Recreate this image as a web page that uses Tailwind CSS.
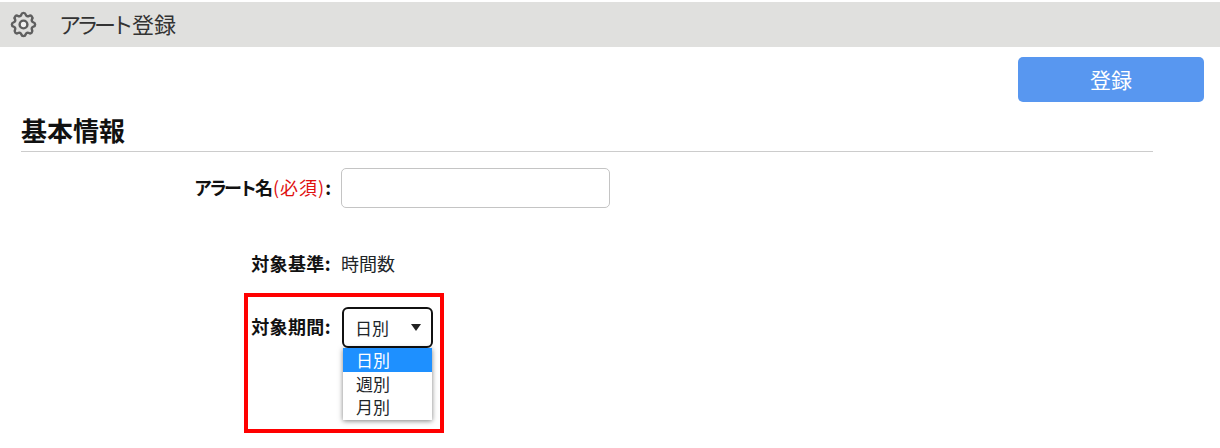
<!DOCTYPE html>
<html lang="ja">
<head>
    <meta charset="UTF-8">
    <title>アラート登録</title>
    <script src="https://cdn.jsdelivr.net/npm/@tailwindcss/browser@4"></script>
</head>
<body class="relative h-[448px] w-[1220px] overflow-hidden bg-white pt-[2px] font-['Noto_Sans_CJK_JP','Liberation_Sans',sans-serif] text-[#212529]">
    <header class="flex h-[45px] items-center bg-[#e0e0de] pl-[8px]">
        <svg class="h-[31px] w-[31px] text-[#5f5f5f]" viewBox="0 0 24 24" fill="none" stroke="currentColor" stroke-width="1.900" stroke-linecap="round" stroke-linejoin="round">
            <path d="M10.33 4.32c.43-1.76 2.92-1.76 3.35 0a1.72 1.72 0 0 0 2.57 1.07c1.54-.94 3.3.82 2.36 2.37a1.72 1.72 0 0 0 1.07 2.56c1.76.43 1.76 2.93 0 3.36a1.72 1.72 0 0 0-1.07 2.56c.94 1.54-.82 3.3-2.36 2.37a1.72 1.72 0 0 0-2.57 1.06c-.43 1.76-2.92 1.76-3.35 0a1.72 1.72 0 0 0-2.58-1.06c-1.54.93-3.3-.83-2.36-2.37a1.72 1.72 0 0 0-1.06-2.56c-1.76-.43-1.76-2.93 0-3.36a1.72 1.72 0 0 0 1.06-2.56c-.94-1.55.82-3.31 2.36-2.37 1 .6 2.29.07 2.58-1.07z"/>
            <circle cx="12" cy="12" r="3" fill="#f2f2f2"/>
        </svg>
        <h1 class="mb-[2px] ml-[20px] text-[22px] text-[#333]"><span class="tracking-[-4.5px]">アラート</span><span class="ml-[3px]">登録</span></h1>
    </header>

    <div class="flex justify-end pt-[10px] pr-[16px]">
        <button class="h-[45px] w-[186px] rounded-[5px] bg-[#5897f0] text-[21px] text-white">登録</button>
    </div>

    <section class="ml-[21px] mt-[9px] w-[1132px]">
        <h2 class="border-b border-[#ccc] pb-[3px] text-[26px] leading-[37px] font-bold text-[#111]">基本情報</h2>

        <div class="mt-[16px] flex h-[40px] items-center">
            <label class="mb-[2px] w-[310px] text-right text-[18px] font-bold text-[#111]"><span class="tracking-[-3px]">アラート</span><span class="ml-[1px]">名</span><span class="font-normal tracking-[1px] text-[#e01010]">(必須)</span>:</label>
            <input type="text" class="ml-[10px] h-[40px] w-[269px] rounded-[5px] border border-[#c4c4c4] bg-white">
        </div>

        <div class="mt-[36px] flex h-[40px] items-center">
            <label class="mb-[2px] w-[310px] text-right text-[18px] font-bold tracking-[0.4px] text-[#111]">対象基準:</label>
            <span class="mb-[2px] ml-[10px] text-[18px]">時間数</span>
        </div>

        <div class="mt-[23px] flex items-start">
            <label class="w-[310px] pt-[6px] text-right text-[18px] font-bold tracking-[0.4px] text-[#111]">対象期間:</label>
            <div class="relative ml-[11px]">
                <div class="flex h-[41px] w-[91px] items-center justify-between rounded-[6px] border-2 border-[#111] pr-[10px] pl-[11px] text-[17px]">
                    <span>日別</span>
                    <svg class="h-[7px] w-[10px]" viewBox="0 0 10 7"><path d="M0 0h10L5 7z" fill="#222"/></svg>
                </div>
                <ul class="absolute top-[41px] left-[1px] h-[72px] w-[89px] bg-white text-[17px] leading-[23px] shadow-[0_1px_5px_rgba(0,0,0,0.5)]">
                    <li class="h-[24px] bg-[#1e90ff] pl-[13px] text-white">日別</li>
                    <li class="pl-[13px]">週別</li>
                    <li class="pl-[13px]">月別</li>
                </ul>
            </div>
        </div>
    </section>

    <div class="absolute top-[293px] left-[244px] h-[140px] w-[200px] border-4 border-[#ff0000]"></div>
</body>
</html>
